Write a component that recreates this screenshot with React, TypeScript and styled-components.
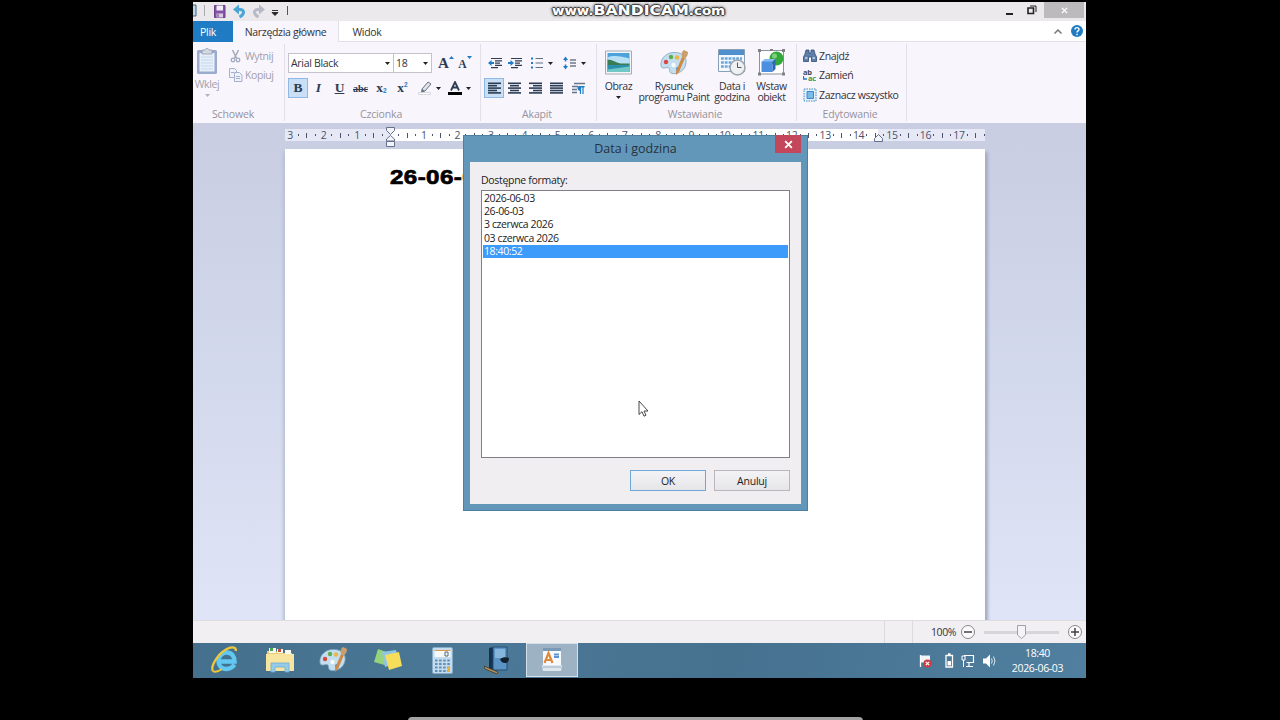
import React from 'react'
import styled, { createGlobalStyle, css } from 'styled-components'

const uiFont = "'Open Sans', 'Noto Sans', 'Liberation Sans', sans-serif"

const colors = {
  ribbon: '#f8f5fc',
  text: '#33333d',
  muted: '#96939c',
  accent: '#1f7cc4',
  frame: '#6397b9',
  line: '#e2dfe8',
  icon: '#2c3d54'
}

const GlobalStyle = createGlobalStyle`
  body {
    margin: 0;
    background: #000;
    overflow: hidden;
    font-family: ${uiFont};
    font-size: 10.5px;
    color: ${colors.text};
  }
  * {
    box-sizing: border-box;
  }
  svg {
    display: block;
    flex: none;
  }
`

const centerFlex = css`
  display: flex;
  align-items: center;
  justify-content: center;
`

const Screen = styled.div`
  position: relative;
  width: 1280px;
  height: 720px;
  padding: 2px 0 0 193px;
  background: #000;
  overflow: hidden;
`

const Capture = styled.div`
  display: flex;
  flex-direction: column;
  width: 893px;
  height: 676px;
  overflow: hidden;
`

const TitleBar = styled.div`
  display: flex;
  height: 19px;
  background: #ebe9eb;
`

const QuickAccess = styled.div`
  display: flex;
  align-items: center;
  flex: 1;
`

const WindowButton = styled.div<{ $width: number; $close?: boolean }>`
  ${centerFlex};
  width: ${({ $width }) => $width}px;
  height: 16px;
  ${({ $close }) => $close && 'background: #bcbabc; margin-right: 2px;'}
`

const TabBar = styled.div`
  display: flex;
  height: 21px;
  background: #fff;
  border-bottom: 1px solid ${colors.line};
`

const Tab = styled.div<{ $width: number; $kind?: 'file' | 'active' }>`
  ${centerFlex};
  width: ${({ $width }) => $width}px;
  height: 21px;
  padding-top: 1px;
  font-size: 10.5px;
  letter-spacing: -0.3px;
  white-space: nowrap;
  color: ${({ $kind }) => ($kind === 'file' ? '#fff' : colors.text)};
  background: ${({ $kind }) => ($kind === 'file' ? colors.accent : $kind === 'active' ? colors.ribbon : 'transparent')};
  ${({ $kind }) => $kind === 'file' && 'padding-right: 10px;'}
  ${({ $kind }) => $kind === 'active' && `border-right: 1px solid ${colors.line};`}
`

const TabTools = styled.div`
  display: flex;
  align-items: center;
  gap: 9px;
  margin-left: auto;
  padding-right: 3px;
`

const Ribbon = styled.div`
  display: flex;
  height: 81px;
  padding-top: 2px;
  background: ${colors.ribbon};
`

const Group = styled.div<{ $width: number }>`
  display: flex;
  flex-direction: column;
  width: ${({ $width }) => $width}px;
  height: 77px;
  border-right: 1px solid ${colors.line};
`

const GroupBody = styled.div<{ $row?: boolean; $pad?: string }>`
  display: flex;
  flex-direction: ${({ $row }) => ($row ? 'row' : 'column')};
  height: 64px;
  padding: ${({ $pad }) => $pad || '0'};
`

const GroupName = styled.div<{ $shift?: number }>`
  height: 13px;
  line-height: 13px;
  padding-right: ${({ $shift }) => $shift || 3}px;
  text-align: center;
  letter-spacing: -0.15px;
  color: ${colors.muted};
`

const BigButton = styled.div<{ $width: number; $muted?: boolean }>`
  display: flex;
  flex-direction: column;
  align-items: center;
  flex: none;
  width: ${({ $width }) => $width}px;
  line-height: 11px;
  text-align: center;
  letter-spacing: -0.4px;
  white-space: nowrap;
  color: ${({ $muted }) => ($muted ? '#a3a0aa' : colors.text)};
`

const BigLabel = styled.span`
  margin: 4px 0 4px;
`

const SmallStack = styled.div<{ $muted?: boolean }>`
  display: flex;
  flex-direction: column;
  color: ${({ $muted }) => ($muted ? '#a3a0aa' : colors.text)};
  ${({ $muted }) => $muted && 'margin: -1px 0 0 7px;'}
`

const SmallButton = styled.div`
  display: flex;
  align-items: center;
  gap: 2px;
  height: 19.5px;
  letter-spacing: -0.38px;
  white-space: nowrap;
`

const ToolRow = styled.div`
  display: flex;
  height: 20px;
  margin-bottom: 5px;
`

const Combo = styled.div<{ $width: number }>`
  display: flex;
  align-items: center;
  justify-content: space-between;
  width: ${({ $width }) => $width}px;
  padding: 0 3px 0 2px;
  border: 1px solid #c4c2ca;
  background: #fff;
  letter-spacing: -0.3px;

  & + & {
    border-left: 0;
  }
`

const Tool = styled.div<{ $width?: number; $on?: boolean }>`
  ${centerFlex};
  gap: 4px;
  width: ${({ $width }) => $width || 21}px;
  height: 20px;
  font-family: 'Liberation Serif', serif;
  font-size: 13.5px;
  font-weight: bold;
  color: ${colors.icon};
  border: 1px solid ${({ $on }) => ($on ? '#8fb8e4' : 'transparent')};
  background: ${({ $on }) => ($on ? '#c9dff6' : 'transparent')};
`

const ToolText = styled.span<{ $kind?: 'italic' | 'underline' | 'strike' | 'large' | 'small' }>`
  ${({ $kind }) => $kind === 'italic' && 'font-style: italic;'}
  ${({ $kind }) => $kind === 'underline' && 'text-decoration: underline;'}
  ${({ $kind }) => $kind === 'strike' && 'text-decoration: line-through; font-size: 10px;'}
  ${({ $kind }) => $kind === 'large' && 'font-size: 15px;'}
  ${({ $kind }) => $kind === 'small' && 'font-size: 11.5px; padding-top: 2px;'}
`

const Script = styled.span<{ $up?: boolean }>`
  align-self: ${({ $up }) => ($up ? 'flex-start' : 'flex-end')};
  margin-left: -4px;
  padding: 2px 0;
  font-family: 'Liberation Sans', sans-serif;
  font-size: 6.5px;
  line-height: 8px;
  color: ${colors.accent};
`

const Workspace = styled.div`
  display: flex;
  flex-direction: column;
  height: 497px;
  padding: 6px 0 0 92px;
  background: linear-gradient(#c8cde1, #d3d9ec 50%, #dfe5f6);
  overflow: hidden;
`

const Ruler = styled.div`
  position: relative;
  display: flex;
  align-items: center;
  width: 700px;
  height: 12px;
  margin-bottom: 8px;
  padding-left: 1px;
  background: linear-gradient(to right, #e6e9f5 105px, #fff 105px, #fff 593px, #e6e9f5 593px);
`

const Mark = styled.span`
  ${centerFlex};
  flex: none;
  width: 8.36px;
  white-space: nowrap;
  font-size: 10.5px;
  line-height: 12px;
  letter-spacing: -0.3px;
  color: #4b526c;
`

const Tick = styled.i<{ $tall?: boolean }>`
  width: 1px;
  height: ${({ $tall }) => ($tall ? 5 : 2)}px;
  background: #4b526c;
`

const RulerHandle = styled.div<{ $left: number; $top: number }>`
  position: absolute;
  left: ${({ $left }) => $left}px;
  top: ${({ $top }) => $top}px;
`

const Page = styled.div`
  width: 700px;
  flex: 1;
  padding: 15px 0 0 105px;
  background: #fff;
  box-shadow: 3px 3px 3px #a5adc4, -2px 3px 3px #b9c0d6;
`

const Heading = styled.div`
  width: 200px;
  transform: scaleX(1.16);
  transform-origin: left;
  font-family: 'Liberation Sans', sans-serif;
  font-size: 20.8px;
  font-weight: bold;
  line-height: 26px;
  letter-spacing: 0.35px;
  -webkit-text-stroke: 0.7px #000;
  color: #000;
`

const StatusBar = styled.div`
  display: flex;
  align-items: center;
  justify-content: flex-end;
  height: 23px;
  padding-right: 4px;
  background: #f1eff1;
  border-top: 1px solid #e0dde2;
`

const StatusCell = styled.div<{ $width: number }>`
  width: ${({ $width }) => $width}px;
  height: 22px;
  border-left: 1px solid #dddade;
`

const Zoom = styled.span`
  width: 30px;
  margin-left: -8px;
  font-size: 10.5px;
  letter-spacing: -0.4px;
`

const Round = styled.div`
  ${centerFlex};
  width: 14px;
  height: 14px;
  border: 1px solid #8a888c;
  border-radius: 50%;
  background: #fafafa;
`

const Track = styled.div`
  ${centerFlex};
  width: 75px;
  height: 3px;
  margin: 0 9px;
  background: #d7d5d9;
`

const Taskbar = styled.div`
  display: flex;
  height: 35px;
  padding-left: 5px;
  background: linear-gradient(100deg, #44708d, #4b7896 35%, #46718f 60%, #507f9f);
`

const TaskButton = styled.div<{ $active?: boolean }>`
  ${centerFlex};
  width: ${({ $active }) => ($active ? 52 : 54.4)}px;
  height: 34px;
  ${({ $active }) => $active && 'margin-left: 2px; background: #9db3c4; border: 1px solid #d5e0e8;'}
`

const Tray = styled.div`
  display: flex;
  align-items: center;
  margin-left: auto;
  padding-right: 22px;
  color: #fff;
`

const Clock = styled.div`
  width: 53px;
  margin: 1px 0 0 14px;
  text-align: center;
  line-height: 15px;
  letter-spacing: -0.35px;
  white-space: nowrap;
`

const Dialog = styled.div`
  position: absolute;
  left: 463px;
  top: 135px;
  display: flex;
  flex-direction: column;
  width: 345px;
  height: 376px;
  padding: 0 6px 6px;
  background: ${colors.frame};
  border: 1px solid #4f7f9f;
`

const DialogTitle = styled.div`
  position: relative;
  ${centerFlex};
  height: 26px;
  padding-bottom: 2px;
  font-size: 12.5px;
  letter-spacing: 0;
  color: #26323c;
`

const DialogClose = styled.div`
  position: absolute;
  right: 0;
  top: -1px;
  ${centerFlex};
  width: 26px;
  height: 18px;
  background: #c3465a;
`

const DialogBody = styled.div`
  display: flex;
  flex-direction: column;
  flex: 1;
  padding: 11px 11px 12px;
  background: #f1eef2;
  color: #1c1c1c;
`

const FieldLabel = styled.div`
  height: 17px;
  line-height: 14px;
  letter-spacing: -0.3px;
`

const ListBox = styled.div`
  height: 268px;
  margin-bottom: 12px;
  padding: 1px;
  border: 1px solid #7f7f85;
  background: #fff;
`

const ListItem = styled.div<{ $selected?: boolean }>`
  height: 13.2px;
  line-height: 13px;
  padding-left: 1px;
  letter-spacing: -0.4px;
  color: ${({ $selected }) => ($selected ? '#fff' : '#1c1c1c')};
  background: ${({ $selected }) => ($selected ? '#3d9bfb' : 'transparent')};
`

const Buttons = styled.div`
  display: flex;
  justify-content: flex-end;
  gap: 8px;
`

const Button = styled.div<{ $primary?: boolean }>`
  ${centerFlex};
  width: 76px;
  height: 21px;
  letter-spacing: -0.2px;
  border: 1px solid ${({ $primary }) => ($primary ? '#6fa8d8' : '#b9b7bb')};
  background: linear-gradient(#f3f2f4, #e6e5e7);
`

const Cursor = styled.div`
  position: absolute;
  left: 638px;
  top: 400px;
`

const Watermark = styled.div`
  position: absolute;
  left: 552px;
  top: 2px;
  height: 17px;
  line-height: 17px;
  white-space: nowrap;
  transform: scaleX(1.12);
  transform-origin: left;
  font-family: 'DejaVu Sans', sans-serif;
  font-weight: bold;
  font-size: 12px;
  color: #fff;
  text-shadow: 1px 0 #444, -1px 0 #444, 0 1px #444, 0 -1px #444, 0 0 3px #222, 0 0 3px #222;
`

const WatermarkName = styled.span`
  font-size: 14px;
`

const BottomBar = styled.div`
  position: absolute;
  left: 408px;
  top: 717px;
  width: 455px;
  height: 6px;
  border-radius: 4px 4px 0 0;
  background: #a3a3a3;
`

const Arrow = ({ color = '#222' }: { color?: string }) => (
  <svg width="5" height="3" viewBox="0 0 5 3">
    <path d="M0 0h5L2.5 3z" fill={color} />
  </svg>
)

const Cross = ({ size, width = 1.6 }: { size: number; width?: number }) => (
  <svg width={size} height={size} viewBox="0 0 8 8">
    <path d="M1 1l6 6M7 1L1 7" stroke="#fff" strokeWidth={width} />
  </svg>
)

const QuickIcons = () => (
  <svg width="100" height="19" viewBox="193 2 100 19">
    <path d="M193 5h3v11h-3" fill="#b9d6ea" stroke="#3f627c" />
    <path d="M204.500 5v11" stroke="#aaa" />
    <path d="M287.500 6v9" stroke="#555" />
    <path d="M214.500 5.500h10.500v12h-10.500z" fill="#8552a8" stroke="#684189" />
    <path d="M216.500 5.500h6.500v5h-6.500z" fill="#f1edf6" />
    <path d="M216.500 13.500h6.500v4h-6.500z" fill="#d9cde5" />
    <path d="M218 14v3" stroke="#60407c" />
    <path d="M237 9.500h3c5 0 4.500 5-.5 7.500" fill="none" stroke="#4aa5d5" strokeWidth="3" />
    <path d="M233 9.500l6-5v10z" fill="#4aa5d5" />
    <path d="M261 9.500h-3c-5 0-4.500 5 .5 7.500" fill="none" stroke="#b6bac6" strokeWidth="3" />
    <path d="M265 9.500l-6-5v10z" fill="#b6bac6" />
    <path d="M272 10.500h6M272 12.500h6l-3 3z" fill="#222" stroke="#222" strokeWidth=".9" />
  </svg>
)

const PasteIcon = () => (
  <svg width="24" height="28" viewBox="0 -1 24 28">
    <rect x="2" y="2" width="20" height="24" rx="1.500" fill="#9aabcc" />
    <path d="M4.500 5h15v18.500h-15z" fill="#e6effa" />
    <path d="M6 9h12M6 12h12M6 15h12M6 18h12M6 21h12" stroke="#c6d7ec" />
    <path d="M7 2h3c0-2 4-2 4 0h3v4H7z" fill="#d4d8e4" stroke="#9299ab" strokeWidth=".8" />
  </svg>
)

const CutIcon = () => (
  <svg width="15" height="14" viewBox="0 0 15 14">
    <path d="M4.500 1l4 8M10.500 1l-4 8" stroke="#a2a9bb" strokeWidth="1.500" />
    <g fill="none" stroke="#a2a9bb" strokeWidth="1.300">
      <circle cx="5" cy="11" r="1.800" />
      <circle cx="10" cy="11" r="1.800" />
    </g>
  </svg>
)

const CopyIcon = () => (
  <svg width="15" height="14" viewBox="0 0 15 14">
    <g fill="#eef3fb" stroke="#a6b0c8">
      <path d="M1.500.500h5l2 2v7h-7z" />
      <path d="M6.500 4.500h5l2.500 2.500v6.500H6.500z" />
    </g>
    <path d="M8 8.500h4M8 10.500h4M3 4.500h3" stroke="#a6b0c8" />
  </svg>
)

const GrowIcon = ({ shrink }: { shrink?: boolean }) => (
  <svg width="5" height="4" viewBox="0 0 5 4">
    <path d={shrink ? 'M0 0h5L2.500 3z' : 'M0 3h5L2.500 0z'} fill={colors.accent} />
  </svg>
)

const PenIcon = () => (
  <svg width="14" height="14" viewBox="0 0 14 14">
    <path d="M4 8l6-7 3 2-6 7-3 1z" fill="#dfe3ea" stroke="#6b7482" />
    <path d="M4 8l3 2-4 1.500z" fill="#6b7482" />
    <path d="M.500 11.500h12v2H.500z" fill="#fff" stroke="#c3c5cc" strokeWidth=".6" />
  </svg>
)

const Lines = ({ rows }: { rows: [number, number][] }) => (
  <svg width="13" height="12" viewBox="0 0 13 12">
    {rows.map(([x, w], i) => (
      <rect key={i} x={x} y={0.5 + i * 2.4} width={w} height="1.600" fill={colors.icon} />
    ))}
  </svg>
)

const IndentIcon = ({ right }: { right?: boolean }) => (
  <svg width="14" height="12" viewBox="0 0 14 12">
    <path d="M3 1.500h11M7 3.800h7M7 6.100h5M7 8.400h7M3 10.700h7" stroke={colors.icon} strokeWidth="1.200" />
    <path d={right ? 'M6 6L2.500 3v2H0v2h2.500v2z' : 'M0 6l3.500-3v2H6v2H3.500v2z'} fill={colors.accent} />
  </svg>
)

const BulletsIcon = () => (
  <svg width="13" height="12" viewBox="0 0 13 12">
    <path d="M0 1.500h2M0 6h2M0 10.500h2" stroke={colors.accent} strokeWidth="2" />
    <path d="M4.500 1.500H12M4.500 6H12M4.500 10.500H12" stroke="#5e6f80" strokeWidth="1.200" />
  </svg>
)

const SpacingIcon = () => (
  <svg width="14" height="14" viewBox="0 0 14 14">
    <path d="M0 4l2.500-3.500L5 4zM0 10l2.500 3.500L5 10z" fill={colors.accent} />
    <path d="M2.500 3v2.500M2.500 8.500V11" stroke={colors.accent} strokeWidth="1.500" />
    <path d="M7 4h6M7 7h6M7 10h6" stroke={colors.icon} strokeWidth="1.200" />
  </svg>
)

const ParagraphIcon = () => (
  <svg width="13" height="13" viewBox="0 0 13 13">
    <path d="M2 1.500h11M0 4.500h6M0 7.500h5M0 10.500h5" stroke="#66758a" strokeWidth="1.300" />
    <path d="M8.500 4v8M11 4v8" stroke={colors.accent} strokeWidth="1.200" />
    <path d="M7 4h5.500v1.500H9v3a2 2 0 0 1-2-4.500z" fill={colors.accent} />
  </svg>
)

const PictureIcon = () => (
  <svg width="27" height="28" viewBox="0 -1.500 27 28">
    <path d="M.500.500h26v23H.500z" fill="#f4f5f6" stroke="#a5abb2" />
    <path d="M2.500 2.500h22v19h-22z" fill="#4ba2dc" />
    <path d="M2.500 7c6-3 14-1 22 1v6h-22z" fill="#b8e0f4" />
    <path d="M2.500 9c5 0 8 3 13 4h9v2h-22z" fill="#3a7c54" />
    <path d="M2.500 14.500h22v7h-22z" fill="#2b8fae" />
    <path d="M2.500 19l22-3v5.500h-22z" fill="#71c8c6" />
  </svg>
)

const PaletteIcon = () => (
  <svg width="29" height="28" viewBox="0 0 29 28">
    <path d="M1 17C0 9 7 3 15 3.500c8 0 12 5 11 11-1 7-8 11-14 10-4-1-1-5-4-6-3 0-6 2-7-1.500z" fill="#c3deef" stroke="#7fa5c0" strokeWidth=".8" />
    <circle cx="6" cy="13" r="2.200" fill="#d8463e" />
    <circle cx="11" cy="8" r="2.200" fill="#5dae4a" />
    <circle cx="17" cy="8.500" r="2.300" fill="#e8b84b" />
    <circle cx="13.500" cy="16" r="2.200" fill="#f7fbfd" />
    <circle cx="18" cy="20" r="2" fill="#4089d0" />
    <path d="M22 8l3 1-6 14-3 3c0-3 0-5 1-6z" fill="#cf8a45" />
    <path d="M22 8c-1-3 0-6 2-7l4 2c0 3-1 5-3 6z" fill="#c99f6c" />
  </svg>
)

const DateIcon = () => (
  <svg width="28" height="28" viewBox="0 0 28 28">
    <path d="M.500.500h26v22H.500z" fill="#f3f8fd" stroke="#8aa0b5" />
    <path d="M1 1h25v5H1z" fill="#4f8fce" />
    <path d="M3 9.500h21M3 13.500h21M3 17.500h21" stroke="#6aa5dc" strokeWidth="2.500" strokeDasharray="2.800 1" />
    <circle cx="19.500" cy="18.500" r="7.500" fill="#eef0f2" stroke="#9aa2ab" strokeWidth="1.500" />
    <path d="M19.500 13.500v5h4" fill="none" stroke="#556" />
  </svg>
)

const ObjectIcon = () => (
  <svg width="27" height="28" viewBox="0 0 27 28">
    <path d="M1.500 1.500h24v23.500h-24z" fill="#fff" stroke="#8d9299" />
    <circle cx="18.500" cy="9.500" r="7" fill="#34a83c" />
    <circle cx="16.500" cy="7" r="2.500" fill="#7fd07c" />
    <path d="M3.500 13l3-3h11l-3 3z" fill="#86bdf2" />
    <path d="M3.500 12.500h11V23h-11z" fill="#4c8fe0" />
    <path d="M14.500 12.500L17.500 10v10l-3 3z" fill="#2b68b6" />
    <path d="M0 0h3v3H0zM24 0h3v3h-3zM0 23.500h3v3H0zM24 23.500h3v3h-3zM12 0h3v2h-3z" fill="#7d8289" />
  </svg>
)

const FindIcon = () => (
  <svg width="14" height="13" viewBox="0 0 14 13">
    <path d="M3 1h3v3h2V1h3l1 4 1.500 3v4.500h-5V8h-3v4.500h-5V8L2 5z" fill="#5f7fa8" stroke="#2f4a73" strokeWidth=".8" />
    <path d="M2 9h2.500M9.500 9H12" stroke="#c8daf0" strokeWidth="1.300" />
  </svg>
)

const ReplaceMark = styled.span`
  display: flex;
  flex-direction: column;
  width: 14px;
  font-size: 7.5px;
  font-weight: bold;
  line-height: 6px;
  letter-spacing: -0.4px;
  color: #3c4a5e;
`

const ReplaceTarget = styled.span`
  display: flex;
  align-items: center;
  gap: 1px;
  color: #3a9a4a;
`

const SelectIcon = () => (
  <svg width="14" height="14" viewBox="0 0 14 14">
    <path d="M1 1h12v12H1z" fill="#e6f2fb" stroke="#3f88c0" strokeDasharray="1.500 1" />
    <path d="M4 3.500h6.500v7H4z" fill="#7dbbea" stroke="#3c88c8" />
  </svg>
)

const ExplorerE = () => (
  <svg width="28" height="28" viewBox="0 0 28 28">
    <path d="M23.500 18.500C21 22 18.500 23 15.500 23c-5 0-8-3.500-8-8 0-5 3.500-8.500 8-8.500 5 0 8 3.500 8 9H9" fill="none" stroke="#62c8f2" strokeWidth="4.500" />
    <path d="M2 25C-1 21 6 9 15 3.500c5-3 10-3 10 1.500" fill="none" stroke="#efc73a" strokeWidth="2.200" />
    <path d="M2 25c2 2 6 0 9-2" fill="none" stroke="#efc73a" strokeWidth="2" />
  </svg>
)

const FolderIcon = () => (
  <svg width="30" height="26" viewBox="0 0 30 26">
    <path d="M2 4h9l2 2h14v18H2z" fill="#e9cf79" />
    <path d="M4 1h7v5H4zM12 2h6v4h-6zM20 3h6v4h-6z" fill="#f7f7ee" />
    <path d="M5 1h3v3H5z" fill="#48a24e" />
    <path d="M13 2h3v3h-3z" fill="#c8503b" />
    <path d="M1 7h28v17H1z" fill="#f6e4a0" />
    <path d="M6 25v-9h18v9h-4v-5H10v5z" fill="#94cbe8" stroke="#6fabd0" strokeWidth=".8" />
  </svg>
)

const NotesIcon = () => (
  <svg width="29" height="24" viewBox="0 0 29 24">
    <path d="M4 1l14 5-4 12L0 14z" fill="#96d37c" />
    <path d="M8 4l14-2 3 13-14 4z" fill="#8fc6e6" />
    <path d="M11 7l14-3 3 14-13 4z" fill="#f6dd5a" />
  </svg>
)

const CalculatorIcon = () => (
  <svg width="21" height="27" viewBox="0 0 21 27">
    <rect x=".500" y=".500" width="20" height="26" rx="1.500" fill="#c4dcee" stroke="#86abc8" />
    <path d="M2.500 3h16v7h-16z" fill="#f4f8fa" />
    <path d="M2.500 3.500h16" stroke="#dc9a4a" />
    <path d="M13 5h3v4h-3z" fill="none" stroke="#546b80" />
    <path d="M3 13.500h15M3 17h15M3 20.500h15M3 24h15" stroke="#5d8fb8" strokeWidth="2" strokeDasharray="2.500 1.600" />
    <path d="M15.500 19.500h2.500V25h-2.500z" fill="#e6b23c" />
  </svg>
)

const JournalIcon = () => (
  <svg width="26" height="28" viewBox="0 0 26 28">
    <path d="M5 2l4-1v24l-4-2z" fill="#17324c" />
    <path d="M9 1h14v23H9z" fill="#5b94c4" stroke="#234c74" />
    <path d="M11 3h10v9H11z" fill="#86b5dc" />
    <path d="M16 13c3-2 6-2 9-1 0 4-2 5-4 5s-4-1-5-4z" fill="#12202e" />
    <path d="M0 20l14 6-1 2L1 23z" fill="#b2925c" stroke="#3c3020" strokeWidth=".7" />
  </svg>
)

const WordPadIcon = () => (
  <svg width="22" height="26" viewBox="0 0 22 26">
    <path d="M2 1h18v22H2z" fill="#7899b8" />
    <path d="M2 4h18v14H2z" fill="#f7fafd" />
    <path d="M3.500 16L7.500 6l4 10M5 13h5" fill="none" stroke="#e0893a" strokeWidth="2.200" />
    <path d="M13 7.500h5M13 10h5" stroke="#5c95d2" strokeWidth="2.200" />
    <path d="M1 18h20l-1 6H2z" fill="#dfe7ee" />
    <path d="M2 20h18" stroke="#9aaec2" />
  </svg>
)

const TrayIcons = () => (
  <svg width="78" height="18" viewBox="0 0 78 18">
    <path d="M1.500 3v12" stroke="#fff" strokeWidth="1.300" />
    <path d="M2 3.500h9v7H2z" fill="#f0f4f7" />
    <circle cx="8.500" cy="11.500" r="4" fill="#cf3b41" />
    <path d="M6.800 9.800l3.400 3.400M10.200 9.800l-3.400 3.400" stroke="#fff" strokeWidth="1.200" />
    <path d="M27 3.500h6.500v11.500H27zM29 2h2.500" fill="none" stroke="#fff" strokeWidth="1.300" />
    <path d="M28.500 9h3.500v4.500h-3.500z" fill="#fff" />
    <path d="M45 3.500h9.500v7h-7M50 10.500v3.500M47 14.500h7" fill="none" stroke="#fff" strokeWidth="1.200" />
    <path d="M43 4h3v4h-3zM44.500 8v7" fill="#4c7997" stroke="#fff" />
    <path d="M64 6.500h3l4-4v13l-4-4h-3z" fill="#fff" />
    <path d="M72.500 6.500q1.500 2.500 0 5M74.500 4.500q3 4.500 0 9" fill="none" stroke="#dfe9f0" />
  </svg>
)

const firstMark = -3
const rulerMarks = Array.from({ length: 84 }, (_, i) => {
  const step = i % 4
  const value = Math.abs(firstMark + Math.floor(i / 4))
  return { step, label: step === 0 && value !== 0 ? String(value) : '' }
})

const formats = ['2026-06-03', '26-06-03', '3 czerwca 2026', '03 czerwca 2026', '18:40:52']

const taskIcons = [ExplorerE, FolderIcon, PaletteIcon, NotesIcon, CalculatorIcon, JournalIcon]

const RibbonBar = () => (
  <Ribbon>
    <Group $width={92}>
      <GroupBody $row $pad="3px 0 0">
        <BigButton $width={28} $muted>
          <PasteIcon />
          <BigLabel>Wklej</BigLabel>
          <Arrow color="#b5b2ba" />
        </BigButton>
        <SmallStack $muted>
          <SmallButton><CutIcon />Wytnij</SmallButton>
          <SmallButton><CopyIcon />Kopiuj</SmallButton>
        </SmallStack>
      </GroupBody>
      <GroupName $shift={11}>Schowek</GroupName>
    </Group>
    <Group $width={196}>
      <GroupBody $pad="9px 0 0 3px">
        <ToolRow>
          <Combo $width={106}>Arial Black<Arrow /></Combo>
          <Combo $width={38}>18<Arrow /></Combo>
          <Tool $width={28}><ToolText $kind="large">A</ToolText><Script $up><GrowIcon /></Script></Tool>
          <Tool $width={10}><ToolText $kind="small">A</ToolText><Script $up><GrowIcon shrink /></Script></Tool>
        </ToolRow>
        <ToolRow>
          <Tool $width={20} $on>B</Tool>
          <Tool><ToolText $kind="italic">I</ToolText></Tool>
          <Tool><ToolText $kind="underline">U</ToolText></Tool>
          <Tool><ToolText $kind="strike">abc</ToolText></Tool>
          <Tool>x<Script>2</Script></Tool>
          <Tool>x<Script $up>2</Script></Tool>
          <Tool $width={33}><PenIcon /><Arrow /></Tool>
          <Tool $width={26}>
            <svg width="14" height="14" viewBox="0 0 14 14">
              <path d="M3 9.500L7 1l4 8.500M4.500 6.500h5" fill="none" stroke={colors.icon} strokeWidth="1.800" />
              <path d="M0 11h14v3H0z" fill="#000" />
            </svg>
            <Arrow />
          </Tool>
        </ToolRow>
      </GroupBody>
      <GroupName>Czcionka</GroupName>
    </Group>
    <Group $width={116}>
      <GroupBody $pad="9px 0 0 3px">
        <ToolRow>
          <Tool><IndentIcon /></Tool>
          <Tool $width={20}><IndentIcon right /></Tool>
          <Tool $width={34}><BulletsIcon /><Arrow /></Tool>
          <Tool $width={31}><SpacingIcon /><Arrow /></Tool>
        </ToolRow>
        <ToolRow>
          <Tool $width={20} $on><Lines rows={[[0, 13], [0, 9], [0, 13], [0, 9], [0, 13]]} /></Tool>
          <Tool><Lines rows={[[0, 13], [2, 9], [0, 13], [2, 9], [0, 13]]} /></Tool>
          <Tool><Lines rows={[[0, 13], [4, 9], [0, 13], [4, 9], [0, 13]]} /></Tool>
          <Tool><Lines rows={[[0, 13], [0, 13], [0, 13], [0, 13], [0, 13]]} /></Tool>
          <Tool $width={23}><ParagraphIcon /></Tool>
        </ToolRow>
      </GroupBody>
      <GroupName>Akapit</GroupName>
    </Group>
    <Group $width={200}>
      <GroupBody $row $pad="5px 0 0 3px">
        <BigButton $width={37}><PictureIcon /><BigLabel>Obraz</BigLabel><Arrow /></BigButton>
        <BigButton $width={74}><PaletteIcon /><BigLabel>Rysunek<br />programu Paint</BigLabel></BigButton>
        <BigButton $width={42}><DateIcon /><BigLabel>Data i<br />godzina</BigLabel></BigButton>
        <BigButton $width={37}><ObjectIcon /><BigLabel>Wstaw<br />obiekt</BigLabel></BigButton>
      </GroupBody>
      <GroupName>Wstawianie</GroupName>
    </Group>
    <Group $width={110}>
      <GroupBody $pad="2px 0 0 6px">
        <SmallStack>
          <SmallButton><FindIcon />Znajdź</SmallButton>
          <SmallButton>
            <ReplaceMark>
              ab
              <ReplaceTarget>
                <svg width="4" height="5" viewBox="0 0 4 5"><path d="M.500 0v3H4" fill="none" stroke={colors.accent} strokeWidth="1.300" /></svg>
                ac
              </ReplaceTarget>
            </ReplaceMark>
            Zamień
          </SmallButton>
          <SmallButton><SelectIcon />Zaznacz wszystko</SmallButton>
        </SmallStack>
      </GroupBody>
      <GroupName>Edytowanie</GroupName>
    </Group>
  </Ribbon>
)

const DateDialog = () => (
  <Dialog>
    <DialogTitle>
      Data i godzina
      <DialogClose><Cross size={9} /></DialogClose>
    </DialogTitle>
    <DialogBody>
      <FieldLabel>Dostępne formaty:</FieldLabel>
      <ListBox>
        {formats.map((format, i) => (
          <ListItem key={format} $selected={i === 4}>{format}</ListItem>
        ))}
      </ListBox>
      <Buttons>
        <Button $primary>OK</Button>
        <Button>Anuluj</Button>
      </Buttons>
    </DialogBody>
  </Dialog>
)

export default function App() {
  return (
    <Screen>
      <GlobalStyle />
      <Capture>
        <TitleBar>
          <QuickAccess><QuickIcons /></QuickAccess>
          <WindowButton $width={22}>
            <svg width="7" height="9" viewBox="0 0 7 9"><path d="M0 8h7" stroke="#222" strokeWidth="2" /></svg>
          </WindowButton>
          <WindowButton $width={24}>
            <svg width="10" height="10" viewBox="0 0 10 10">
              <path d="M1 3h5.500v5.500H1z" fill="none" stroke="#222" strokeWidth="1.600" />
              <path d="M3 1h6v6" fill="none" stroke="#222" />
            </svg>
          </WindowButton>
          <WindowButton $width={40} $close><Cross size={7} /></WindowButton>
        </TitleBar>
        <TabBar>
          <Tab $width={40} $kind="file">Plik</Tab>
          <Tab $width={106} $kind="active">Narzędzia główne</Tab>
          <Tab $width={56}>Widok</Tab>
          <TabTools>
            <svg width="8" height="5" viewBox="0 0 8 5"><path d="M.500 4.500L4 1l3.500 3.500" fill="none" stroke="#777" strokeWidth="1.500" /></svg>
            <svg width="12" height="12" viewBox="0 0 12 12">
              <circle cx="6" cy="6" r="6" fill={colors.accent} />
              <path d="M4 4.500c0-2.500 4-2.500 4-.200C8 6 6 5.800 6 7.500M6 8.800v1.400" fill="none" stroke="#fff" strokeWidth="1.400" />
            </svg>
          </TabTools>
        </TabBar>
        <RibbonBar />
        <Workspace>
          <Ruler>
            {rulerMarks.map(({ step, label }, i) => (
              <Mark key={i}>{step === 0 ? label : <Tick $tall={step === 2} />}</Mark>
            ))}
            <RulerHandle $left={101} $top={-2}>
              <svg width="9" height="21" viewBox="0 0 9 21">
                <g fill="#f4f5fa" stroke="#66708c">
                  <path d="M.500.500h8v3l-4 4-4-4z" />
                  <path d="M4.500 8.500l4 3.500v2h-8v-2z" />
                  <path d="M.500 14.500h8v5h-8z" />
                </g>
              </svg>
            </RulerHandle>
            <RulerHandle $left={589} $top={5}>
              <svg width="9" height="8" viewBox="0 0 9 8">
                <path d="M4.500.500l4 4v3h-8v-3z" fill="#f4f5fa" stroke="#66708c" />
              </svg>
            </RulerHandle>
          </Ruler>
          <Page><Heading>26-06-03</Heading></Page>
        </Workspace>
        <StatusBar>
          <StatusCell $width={28} />
          <StatusCell $width={27} />
          <Zoom>100%</Zoom>
          <Round>
            <svg width="8" height="8" viewBox="0 0 8 8"><path d="M0 4h8" stroke="#444" strokeWidth="1.500" /></svg>
          </Round>
          <Track>
            <svg width="9" height="14" viewBox="0 0 9 14">
              <path d="M.500.500h8V10l-4 3.500-4-3.500z" fill="#f4f3f5" stroke="#a19fa4" />
            </svg>
          </Track>
          <Round>
            <svg width="8" height="8" viewBox="0 0 8 8"><path d="M0 4h8M4 0v8" stroke="#444" strokeWidth="1.500" /></svg>
          </Round>
        </StatusBar>
        <Taskbar>
          {taskIcons.map((TaskIcon, i) => (
            <TaskButton key={i}><TaskIcon /></TaskButton>
          ))}
          <TaskButton $active><WordPadIcon /></TaskButton>
          <Tray>
            <TrayIcons />
            <Clock>18:40<br />2026-06-03</Clock>
          </Tray>
        </Taskbar>
      </Capture>
      <DateDialog />
      <Cursor>
        <svg width="12" height="18" viewBox="0 0 12 18">
          <path d="M1 1v13.500l3-2.800 2 4.500 2-1-2-4.200h4z" fill="#fff" stroke="#333" strokeWidth=".9" />
        </svg>
      </Cursor>
      <Watermark>www.<WatermarkName>BANDICAM</WatermarkName>.com</Watermark>
      <BottomBar />
    </Screen>
  )
}
